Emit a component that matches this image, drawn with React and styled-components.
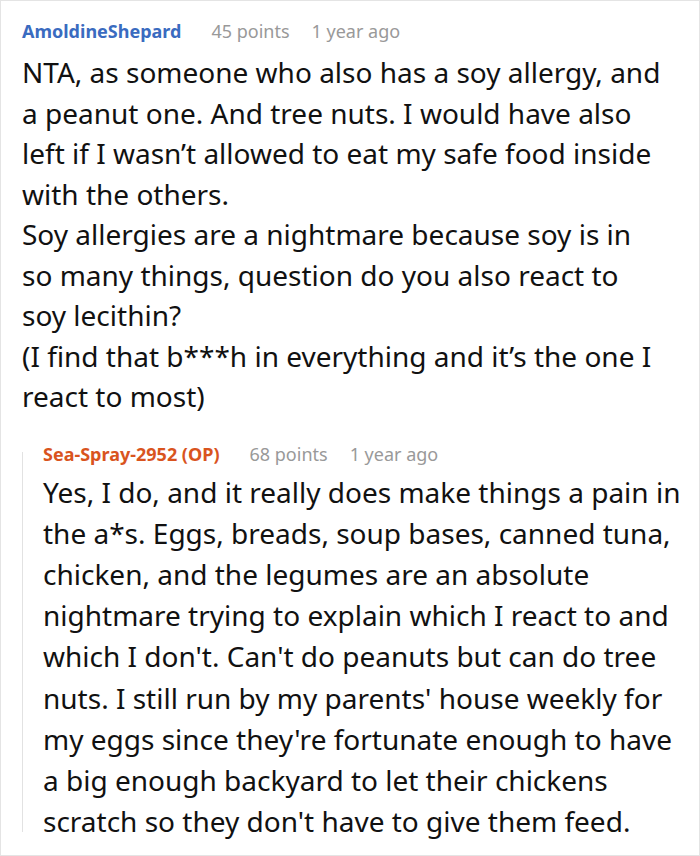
import React from 'react'
import styled, {createGlobalStyle} from 'styled-components'

const GlobalStyle = createGlobalStyle`
    html, body {
        margin: 0;
        padding: 0;
        background: #fff;
    }
    body {
        font-family: 'Noto Sans', 'Open Sans', sans-serif;
        color: #111;
    }
`

const Card = styled.div`
    box-sizing: border-box;
    width: 700px;
    height: 856px;
    border: 1px solid #e4e4e4;
    padding: 16px 37px 0 21px;
    overflow: hidden;
`

const Header = styled.div`
    display: flex;
    align-items: baseline;
    gap: 22px;
    font-size: 18px;
    line-height: 28px;
`

const Author = styled.span`
    font-weight: 700;
    color: ${props => (props.op ? '#d9541e' : '#3a6bc0')};
    margin-right: 8px;
`

const Meta = styled.span`
    color: #999;
`

const Body = styled.p`
    margin: ${props => props.gap || '7px'} 0 0;
    font-size: 28px;
    line-height: ${props => props.lh || '40.5px'};
`

const Thread = styled.div`
    position: relative;
    margin-top: 23px;
    padding-left: 21px;
    margin-right: -25px;

    &::before {
        content: '';
        position: absolute;
        left: 0;
        top: 12px;
        bottom: 10px;
        width: 1px;
        background: #e2e2e2;
    }
`

const Comment = ({author, op, points, age, lh, gap, children}) =>
    <div>
        <Header>
            <Author op={op ? 1 : 0}>{author}</Author>
            <Meta>{points} points</Meta>
            <Meta>{age}</Meta>
        </Header>
        <Body lh={lh} gap={gap}>{children}</Body>
    </div>

const App = () =>
    <>
        <GlobalStyle />
        <Card>
            <Comment author="AmoldineShepard" points={45} age="1 year ago">
                NTA, as someone who also has a soy allergy, and a peanut one. And tree nuts. I would have also
                left if I wasn’t allowed to eat my safe food inside with the others.
                <br />
                Soy allergies are a nightmare because soy is in so many things, question do you also react to
                soy lecithin?
                <br />
                (I find that b***h in everything and it’s the one I react to most)
            </Comment>
            <Thread>
                <Comment author="Sea-Spray-2952 (OP)" op points={68} age="1 year ago" lh="41.2px" gap="4px">
                    Yes, I do, and it really does make things a pain in the a*s. Eggs, breads, soup bases, canned
                    tuna, chicken, and the legumes are an absolute nightmare trying to explain which I react to and
                    which I don't. Can't do peanuts but can do tree nuts. I still run by my parents' house weekly
                    for my eggs since they're fortunate enough to have a big enough backyard to let their chickens
                    scratch so they don't have to give them feed.
                </Comment>
            </Thread>
        </Card>
    </>

export default App
